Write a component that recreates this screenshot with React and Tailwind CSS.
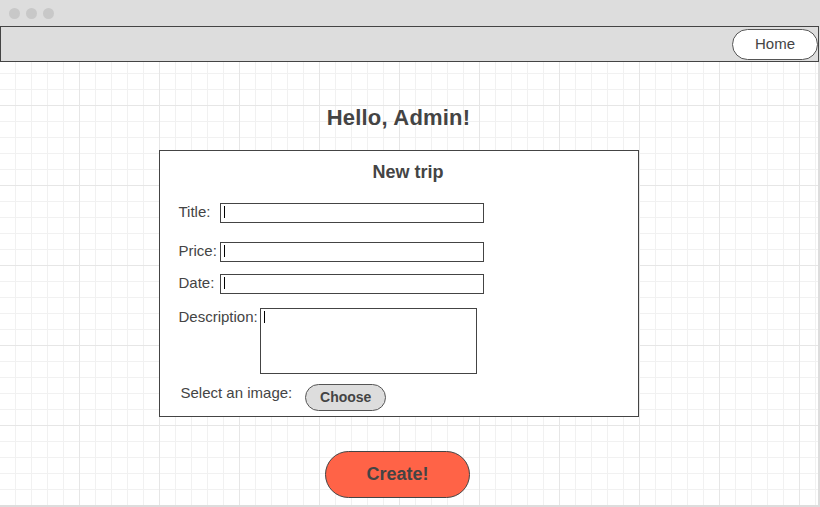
import React from "react";

const font = { fontFamily: "'Liberation Sans', Arial, sans-serif" };

const Caret = () => <span className="block w-px h-[12px] bg-black" />;

const Field = ({ label, top }) => (
  <div className={`flex items-start ${top}`}>
    <span className="w-[41px] text-[15px] leading-[17px] text-[#444]">{label}</span>
    <div className="w-[264px] h-[20px] border border-[#444] bg-white flex items-start pl-[3px] pt-[2px]">
      <Caret />
    </div>
  </div>
);

export default function App() {
  return (
    <div className="w-[820px] h-[507px] flex flex-col bg-white overflow-hidden" style={font}>
      {/* window title bar */}
      <div className="h-[26px] shrink-0 bg-[#dddddd] flex items-center gap-[6px] pl-[9px]">
        <span className="w-[11px] h-[11px] rounded-full bg-[#c8c8c8]" />
        <span className="w-[11px] h-[11px] rounded-full bg-[#c8c8c8]" />
        <span className="w-[11px] h-[11px] rounded-full bg-[#c8c8c8]" />
      </div>

      {/* page with grid paper */}
      <div className="flex-1 flex flex-col border-r-2 border-b-2 border-[#dddddd] bg-white bg-[linear-gradient(to_right,transparent_79px,#e6e6e6_79px),linear-gradient(to_bottom,transparent_79px,#e6e6e6_79px),linear-gradient(to_right,transparent_15px,#f1f1f1_15px),linear-gradient(to_bottom,transparent_15px,#f1f1f1_15px)] bg-[size:80px_80px,80px_80px,16px_16px,16px_16px]">
        <nav className="h-[36px] shrink-0 border border-[#444] bg-[#dddddd] flex items-start justify-end pt-[2px] -mr-px">
          <button className="w-[86px] h-[31px] rounded-full border border-[#555] bg-white text-[15px] text-[#444]">
            Home
          </button>
        </nav>

        <main className="w-[797px] flex flex-col items-center">
          <h1 className="mt-[42px] text-[22px] leading-[28px] font-bold text-[#444] tracking-[0.2px]">Hello, Admin!</h1>

          <section className="mt-[18px] w-[480px] h-[267px] border border-[#444] bg-white flex flex-col">
            <h2 className="mt-[10px] pl-[19px] text-center text-[18px] leading-[22px] font-bold text-[#444]">
              New trip
            </h2>

            <div className="pl-[19px] flex flex-col">
              <Field label="Title:" top="mt-[20px]" />
              <Field label="Price:" top="mt-[19px]" />
              <Field label="Date:" top="mt-[12px]" />

              <div className="mt-[14px] flex items-start">
                <span className="text-[15px] leading-[17px] text-[#444]">Description:</span>
                <div className="ml-[2px] w-[217px] h-[66px] border border-[#444] bg-white flex items-start pl-[3px] pt-[2px]">
                  <Caret />
                </div>
              </div>

              <div className="mt-[10px] pl-[2px] flex items-start">
                <span className="text-[15px] leading-[17px] text-[#444]">Select an image:</span>
                <button className="ml-[13px] w-[81px] h-[27px] rounded-full border border-[#555] bg-[#dddddd] text-[14px] font-bold text-[#444]">
                  Choose
                </button>
              </div>
            </div>
          </section>

          <button className="mt-[34px] mr-[2px] w-[145px] h-[47px] rounded-full border border-[#444] bg-[#ff6347] text-[18px] font-bold text-[#444]">
            Create!
          </button>
        </main>
      </div>
    </div>
  );
}
